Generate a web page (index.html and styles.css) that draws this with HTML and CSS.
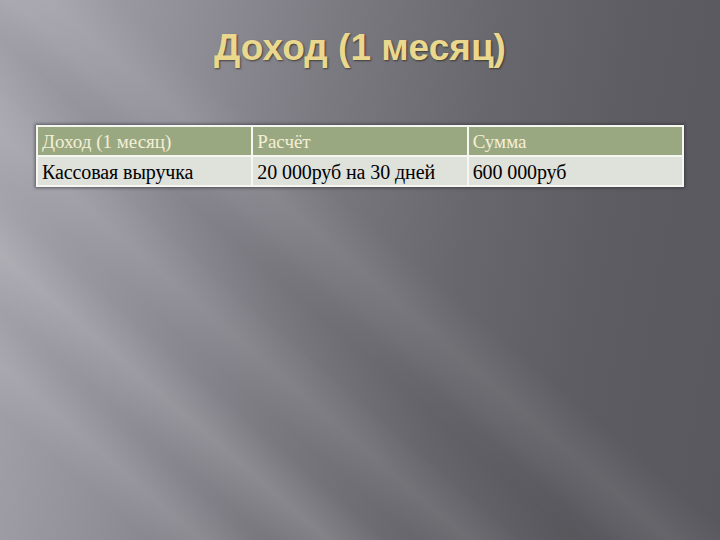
FILE: index.html
```html
<!DOCTYPE html>
<html lang="ru">
<head>
<meta charset="utf-8">
<link rel="stylesheet" href="styles.css">
</head>
<body>
<div class="slide">
  <h1 class="title">Доход (1 месяц)</h1>
  <table class="grid">
    <tr class="head">
      <td>Доход (1 месяц)</td>
      <td>Расчёт</td>
      <td>Сумма</td>
    </tr>
    <tr class="body">
      <td>Кассовая выручка</td>
      <td>20 000руб на 30 дней</td>
      <td>600 000руб</td>
    </tr>
  </table>
</div>
</body>
</html>
```
FILE: styles.css
```css
html, body {
  margin: 0;
  padding: 0;
}
.slide {
  width: 720px;
  height: 540px;
  overflow: hidden;
  box-sizing: border-box;
  padding: 25px 36px 0 36px;
  background:
    linear-gradient(41deg, rgba(255,255,255,0) 11%, rgba(255,255,255,0.09) 15%, rgba(255,255,255,0) 19%),
    linear-gradient(41deg, rgba(255,255,255,0) 20%, rgba(255,255,255,0.12) 24.5%, rgba(255,255,255,0) 29%),
    linear-gradient(41deg, rgba(255,255,255,0) 31%, rgba(255,255,255,0.07) 35%, rgba(255,255,255,0) 39%),
    linear-gradient(41deg, rgba(255,255,255,0) 45%, rgba(255,255,255,0.07) 50%, rgba(255,255,255,0) 55%),
    linear-gradient(41deg, rgba(0,0,0,0) 38%, rgba(0,0,0,0.05) 43%, rgba(0,0,0,0) 47%),
    linear-gradient(100deg, #a9a8b0 0%, #92919a 22%, #7b7a81 42%, #68676d 62%, #5d5c62 80%, #59585e 100%);
}
.title {
  margin: 0;
  text-align: center;
  font-family: "Liberation Sans", Arial, sans-serif;
  font-weight: bold;
  font-size: 37px;
  line-height: 46px;
  color: #ead88f;
  text-shadow: 1px 1px 2px rgba(40,35,20,0.7);
}
.grid {
  margin-top: 54px;
  width: 648px;
  border-collapse: collapse;
  table-layout: fixed;
  font-family: "Liberation Serif", "Times New Roman", serif;
  box-shadow: 0 0 3px 1px rgba(40,40,45,0.6);
}
.grid td {
  border: 2px solid #f6f6f2;
  height: 27px;
  padding: 1px 0 0 4px;
  vertical-align: middle;
  line-height: 22px;
}
.head td {
  background: #9aa882;
  color: #f4efd6;
  font-size: 19px;
}
.body td {
  background: #dfe1db;
  color: #000;
  font-size: 20px;
  letter-spacing: -0.1px;
}
```
